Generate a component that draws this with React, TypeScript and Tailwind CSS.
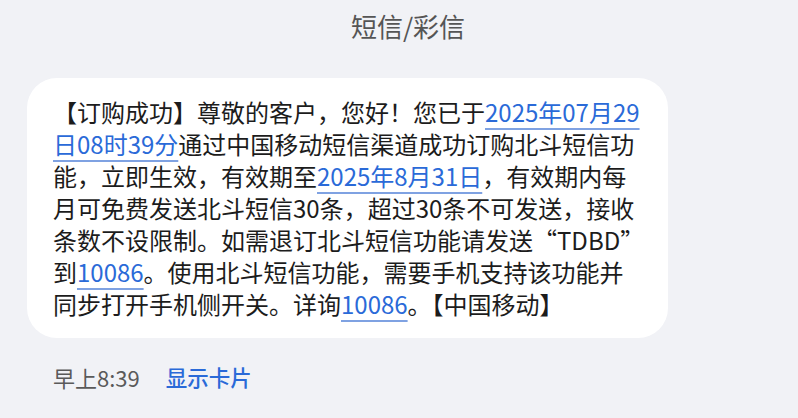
import React from "react";

const font = { fontFamily: '"Noto Sans CJK SC", "Noto Sans", sans-serif' };

function Link({ children }: { children: React.ReactNode }) {
  return (
    <span className="text-[#2a6ad8] underline decoration-[#7fa2e2] decoration-[1.5px] underline-offset-[6px]">
      {children}
    </span>
  );
}

const lines: React.ReactNode[] = [
  <>
    【订购成功】尊敬的客户，您好！您已于<Link>2025年07月29</Link>
  </>,
  <>
    <Link>日08时39分</Link>通过中国移动短信渠道成功订购北斗短信功
  </>,
  <>
    能，立即生效，有效期至<Link>2025年8月31日</Link>，有效期内每
  </>,
  <>月可免费发送北斗短信30条，超过30条不可发送，接收</>,
  <>条数不设限制。如需退订北斗短信功能请发送“TDBD”</>,
  <>
    到<Link>10086</Link>。使用北斗短信功能，需要手机支持该功能并
  </>,
  <>
    同步打开手机侧开关。详询<Link>10086</Link>。【中国移动】
  </>,
];

export default function App() {
  return (
    <div className="h-[418px] w-[798px] overflow-hidden bg-[#f1f2f6]" style={font}>
      <div className="flex h-[50px] items-center justify-center pl-[18px] text-[26px] text-[#555555]">
        短信/彩信
      </div>
      <div className="mt-[28px] ml-[27px] w-[641px] rounded-[30px] bg-white px-[26px] py-[18px] text-[24px] leading-[32px] text-[#1c1c1c]">
        {lines.map((line, i) => (
          <div key={i} className="whitespace-nowrap">
            {line}
          </div>
        ))}
      </div>
      <div className="mt-[25px] ml-[53px] flex items-center gap-[26px] leading-[28px]">
        <span className="text-[22px] text-[#5a5a5a]">早上8:39</span>
        <span className="text-[21.5px] font-medium text-[#2a6ad8]">显示卡片</span>
      </div>
    </div>
  );
}
